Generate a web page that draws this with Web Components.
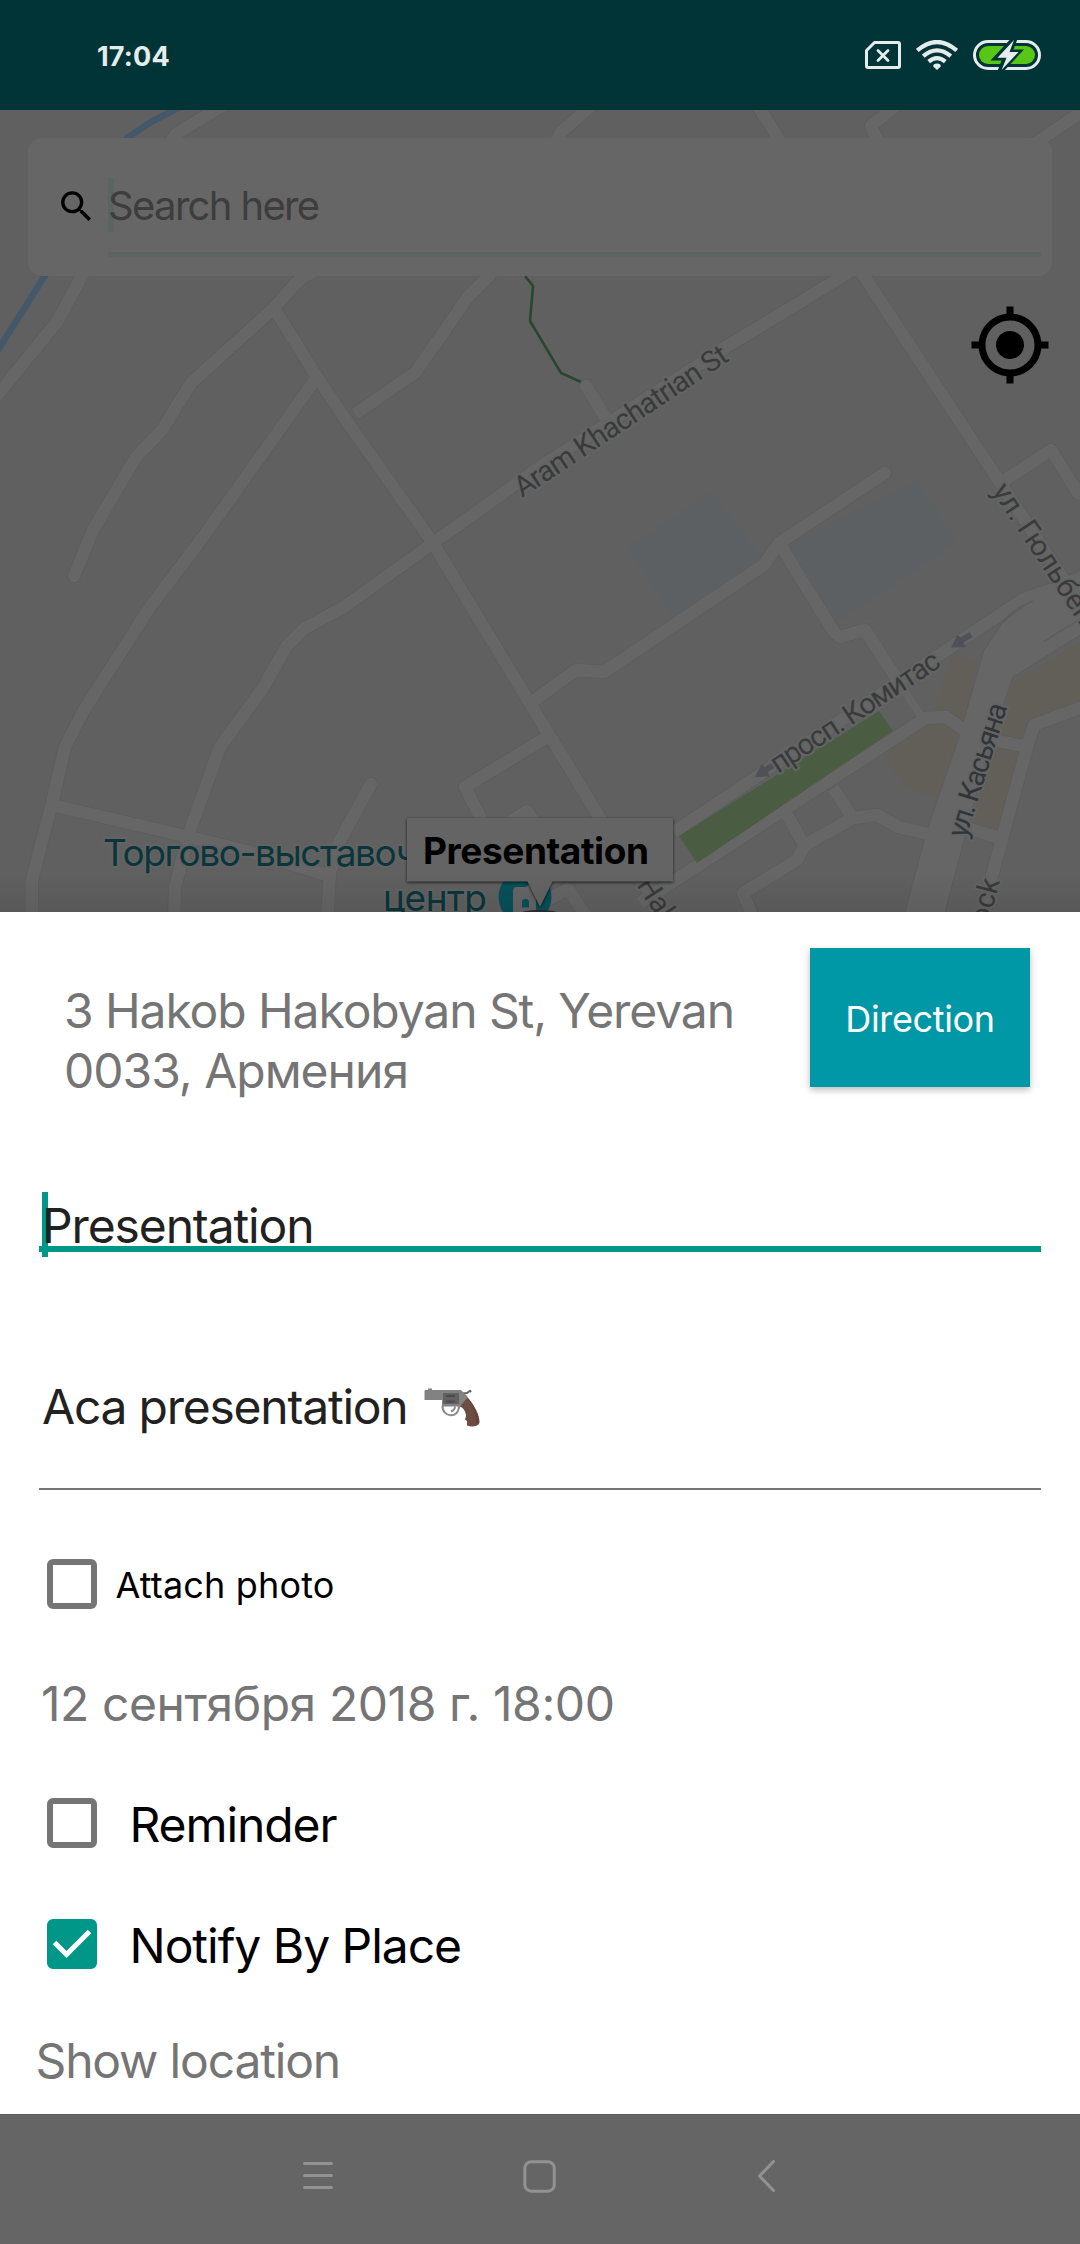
<!DOCTYPE html>
<html lang="ru">
<head>
<meta charset="utf-8">
<title>Place reminder</title>
<style>
body{margin:0;width:1080px;height:2244px;overflow:hidden;background:#606060;font-family:Inter,"Noto Sans",sans-serif}
</style>
</head>
<body>
<reminder-app></reminder-app>
<script>
const define = (name, html, ready) => {
  const tpl = document.createElement('template');
  tpl.innerHTML = html;
  customElements.define(name, class extends HTMLElement {
    connectedCallback() {
      if (this.shadowRoot) return;
      this.attachShadow({ mode: 'open' }).append(tpl.content.cloneNode(true));
      if (ready) ready(this, this.shadowRoot);
    }
  });
};

/* One line of text, tracked so that it fills the width it is given */
define('fit-text', `<style>:host{display:block;white-space:nowrap}span{display:inline-block}</style><span><slot></slot></span>`, (el, root) => {
  const span = root.querySelector('span');
  const want = +el.getAttribute('w');
  const n = el.textContent.length;
  span.style.letterSpacing = (want - span.getBoundingClientRect().width) / n + 'px';
});

define('status-bar', `<style>
:host{display:flex;height:110px;box-sizing:border-box;background:#003437;color:#e6ecec;align-items:center;justify-content:space-between;padding:0 39px 0 97px}
fit-text{font:700 27px/40px Inter,sans-serif;margin-top:4px}
.icons{display:flex;gap:15px;align-items:center}
svg{display:block}
</style>
<fit-text w="73">17:04</fit-text>
<div class="icons">
<svg width="36" height="30" viewBox="0 0 36 30" fill="none" stroke="#e6ecec" stroke-linecap="round" stroke-linejoin="round"><path stroke-width="3" d="M9.500 2.500H33q1.500 0 1.500 1.500V26q0 1.500-1.500 1.500H3q-1.500 0-1.500-1.500V10.500z"/><path stroke-width="2.800" d="M13 10.500 23 20.500M23 10.500 13 20.500"/></svg>
<svg width="42" height="30" viewBox="0 0 42 30" fill="none" stroke="#e6ecec" stroke-width="4.200"><path d="M1.300 10.500Q21-6.500 40.700 10.500"/><path d="M7.200 16.200Q21 4.500 34.800 16.200"/><path d="M12.700 21.600Q21 14.600 29.300 21.600"/><path fill="#e6ecec" stroke="none" d="M21 30l-3.800-3.600q0-2.800 3.800-2.800t3.800 2.800z"/></svg>
<svg width="68" height="30" viewBox="0 0 68 30"><rect x="1.500" y="1.500" width="65" height="27" rx="13.500" fill="none" stroke="#e6ecec" stroke-width="3"/><rect x="6" y="6" width="56" height="18" rx="9" fill="#57c616"/><path fill="#003437" d="M37.500-1 17.500 20.500H28.500L24.500 31H31L51 9.500H40.500L44.500-1z"/><path fill="#e6ecec" d="M41 0 24.500 17.800H33.500L28.600 30 45.500 12H36.500z"/></svg>
</div>`);

define('city-map', `<style>
:host{display:block;position:relative;height:802px;overflow:hidden}
svg{display:block}
text{font-family:Roboto,"Noto Sans",sans-serif}
.lab{font-size:29px;fill:#393b3b;stroke:#646464;stroke-width:4px;paint-order:stroke;stroke-linejoin:round}
.poi{font-family:Inter,sans-serif;font-size:37px;fill:#0a363b;stroke:#636363;stroke-width:4px;paint-order:stroke}
</style>
<svg width="1080" height="802" viewBox="0 110 1080 802">
<defs>
<g id="roads" fill="none" stroke-linejoin="round">
<path d="M232 100 176 134 82 276 57 322-10 404"/>
<path d="M330 262 303 277 296 283 274 308 191 383 162 430 136 457 93 530 74 576" stroke-linecap="round"/>
<path d="M274 308 317 377 355 433 433 543 540 720 605 826 675 930"/>
<path d="M317 377 258 460 203 537 148 610 84 710 65 747 52 803 32 880V920"/>
<path d="M600 98 561 132 489 276 468 297 415 373 355 414"/>
<path d="M753 98 778 138 864 276 972 440 1005 490 1085 612"/>
<path d="M905 98 871 126 878 142"/>
<path d="M1090 106 1039 141 843 276 726 347 540 467 433 543 344 607 305 628 286 647 263 688 220 747 189 833 175 887 174 920"/>
<path d="M586 386 612 428" stroke-linecap="round"/>
<path d="M52 805 189 837 258 854 330 876"/>
<path d="M327 920 330 873 339 842 371 784" stroke-linecap="round"/>
<path d="M547 737 465 787 485 826M510 822 527 811 540 830"/>
<path d="M532 702 576 670 604 672 764 565 779 543 885 473" stroke-linecap="round"/>
<path d="M779 543 834 632 840 637 865 630 902 687"/>
<path d="M902 687 921 716" stroke-width="8"/>
<path d="M640 903 926 718 946 717 968 733"/>
<path d="M674 832 936 657 1022 600 1050 592"/>
<path d="M540 904 568 889 590 922"/>
<path d="M786 813 803 843M833 788 852 817"/>
<path d="M932 835 898 827 877 815 853 818 805 845 797 860 743 893 755 922"/>
<path d="M1005 480 1051 450 1078 493 1090 497"/>
<path d="M1085 706 1034 725 1027 747 984 905M992 740 1029 747M970 829 1000 838"/>
</g>
<linearGradient id="fade" x1="0" y1="0" x2="0" y2="1"><stop offset="0" stop-color="#000" stop-opacity="0"/><stop offset="1" stop-color="#000" stop-opacity=".08"/></linearGradient>
</defs>
<rect y="110" width="1080" height="802" fill="#606060"/>
<g fill="#5d6063"><path d="M626 548 712 490 762 557 673 617z"/><path d="M788 543 917 480 958 543 838 622z"/></g>
<g fill="#625f58"><path d="M953 653 977 662 965 723 950 710 934 710z"/><path d="M884 757 926 723H946L960 735 938 797 905 787z"/><path d="M1013 682 1080 643V703L1036 723 1000 830 974 823 991 740z"/></g>
<path d="M180 107 151 122 127 138 44.800 276 8.600 333-3 352" fill="none" stroke="#44586a" stroke-width="6.500"/>
<use href="#roads" stroke="#5c5c5c" stroke-width="14"/>
<path fill="#666" stroke="#5c5c5c" stroke-width="1" d="M903 920 926 833 958 740 984 650 1003 622 1032 600 1022 592 1050 583 1082 570V634L1013 677 991 740 965 837 943 920z"/>
<use href="#roads" stroke="#666" stroke-width="12.400"/>
<path fill="none" stroke="#5d5d5d" stroke-width="1.500" d="M1003 622Q1010 611 1033 601M1043 642 1082 618"/>
<path fill="#4a5d43" d="M679 836 879 711 893 731 697 863z"/>
<path fill="none" stroke="#28472e" stroke-width="2.600" d="M525 276 533 286 530 321 561 373 581 382"/>
<g fill="#505058"><path id="arr" d="M951 647.500 957.500 635 961 637.500 969.500 632 972.500 637 963.500 642.500 966 647z"/><use href="#arr" transform="translate(-196 129.500)"/></g>
<text class="lab" transform="translate(522 498) rotate(-33.500)" textLength="250">Aram Khachatrian St</text>
<text class="lab" transform="translate(778 774) rotate(-33.400)" textLength="197">просп. Комитас</text>
<text class="lab" transform="translate(966 839) rotate(-72.600)" textLength="139" style="fill:#2f3539">ул. Касьяна</text>
<text class="lab" transform="translate(991.500 491) rotate(56.500)" textLength="162">ул. Гюльбен</text>
<text class="lab" transform="translate(636 885) rotate(57)">Hak</text>
<text class="lab" transform="translate(1000 881) rotate(-75)" text-anchor="end">ock</text>
<text class="poi" x="103" y="866" textLength="314">Торгово-выставоч</text>
<text class="poi" x="383" y="911" textLength="104">центр</text>
<circle cx="525" cy="897" r="26.500" fill="#08505a"/>
<path fill="#666" d="M513 891q0-4 4-4h9l4-3 6 6V912H513z"/><path fill="#08505a" d="M522 907.500V902q0-3 3-3h1q3 0 3 3v5.500z"/>
<ellipse cx="539.500" cy="912.500" rx="17" ry="2.500" fill="#2c2c2c"/>
<path d="M407 818H673V881.500H552.500L540 907 527.500 881.500H407z" fill="#646464" style="filter:drop-shadow(0 1px 1.500px #000b)"/>
<text x="423" y="864" textLength="226" style="font:650 37px Inter,sans-serif">Presentation</text>
<rect y="872" width="1080" height="40" fill="url(#fade)"/>
</svg>
<slot></slot>`);

define('search-card', `<style>
:host{position:absolute;left:28px;top:28px;width:1024px;height:138px;box-sizing:border-box;border-radius:14px;background:#666;display:flex;padding:0 11px 19px 28px}
svg{margin-top:48px;flex:none}
.field{position:relative;flex:1;margin-left:11px;border-bottom:5px solid #5a6462;color:#3d3d3d;font-size:40px;line-height:60px;padding-top:38px;box-sizing:border-box}
.caret{position:absolute;left:0;top:40px;width:6px;height:54px;background:#5a6462}
fit-text{position:relative}
</style>
<svg width="41" height="41" viewBox="0 0 24 24"><path d="M15.500 14h-.79l-.28-.27A6.471 6.471 0 0 0 16 9.500 6.500 6.500 0 1 0 9.500 16c1.610 0 3.090-.59 4.230-1.570l.27.28v.79l5 4.990L20.490 19l-4.990-5zm-6 0C7.010 14 5 11.990 5 9.500S7.010 5 9.500 5 14 7.010 14 9.500 11.990 14 9.500 14z"/></svg>
<div class="field"><div class="caret"></div><fit-text w="210.500">Search here</fit-text></div>`);

define('locate-button', `<style>:host{position:absolute;left:968px;top:193px}svg{display:block}</style>
<svg width="84" height="84" viewBox="0 0 24 24"><path d="M12 8c-2.210 0-4 1.790-4 4s1.790 4 4 4 4-1.790 4-4-1.790-4-4-4zm8.940 3A8.994 8.994 0 0 0 13 3.060V1h-2v2.060A8.994 8.994 0 0 0 3.060 11H1v2h2.060A8.994 8.994 0 0 0 11 20.940V23h2v-2.060A8.994 8.994 0 0 0 20.940 13H23v-2h-2.060zM12 19c-3.870 0-7-3.130-7-7s3.130-7 7-7 7 3.130 7 7-3.130 7-7 7z"/></svg>`);

define('check-row', `<style>
:host{display:flex;align-items:center;height:50px;margin-left:47px;font-size:48px;line-height:60px;color:#000}
.box{width:50px;height:50px;box-sizing:border-box;border:6px solid #757575;border-radius:6px;margin-right:32.500px}
:host([small]){font-size:36px}
:host([small]) .box{margin-right:18.500px}
:host([checked]) .box{background:#009688;border-color:#009688}
.txt{padding-top:4px}
:host([small]) .txt{padding-top:2px}
svg{display:none}
:host([checked]) svg{display:block;margin:-6px}
</style><div class="box"><svg width="50" height="50" fill="none" stroke="#fff" stroke-width="5"><path d="M7.500 23.500 19.500 35.500 42.500 12.500"/></svg></div><div class="txt"><slot></slot></div>`);

define('text-field', `<style>
:host{display:block;position:relative;margin:0 39px;height:var(--h);box-sizing:border-box;border-bottom:var(--line);color:#212121;font-size:48px;line-height:60px;padding-left:3px}
.caret{display:none}
:host([focused]) .caret{display:block;position:absolute;left:3px;top:-4px;width:6px;height:65px;background:#009688}
.row{position:relative;display:flex;align-items:flex-start}
</style><div class="caret"></div><div class="row"><slot></slot></div>`);

define('gun-emoji', `<style>:host{display:block;margin:11px 0 0 16px}svg{display:block}</style>
<svg width="57" height="40" viewBox="0 0 57 40"><path fill="#6d4c41" d="M36 13.500 43 9C50 16 56 28 55.500 34.500 55 38 49 39.500 43 37.500V33L41 31.500 42 28C42 24 39 19 36 18.500z"/><path fill="#5d4037" opacity=".5" d="M44 12c6 6 8 16 8 25l3-2c1-8-5-18-11-25z"/><path fill="none" stroke="#616161" stroke-width="2" d="M38 5.500 43 5 46 2.800 47 4"/><path fill="none" stroke="#8a8a8a" stroke-width="2" d="M18.500 17.500C18 30 35 31 35 18M31 18.500Q31 22 27 23.500"/><path fill="#828282" d="M1 2H4V.5H8V2H37L44 9 36 18.500H18V12H.5V3z"/><path fill="#616161" d="M19 5H35V16H19z"/><path fill="#4a4a4a" d="M22 7H31V9H22zM22 12.500H31V14.500H22z"/></svg>`);

define('place-sheet', `<style>
:host{display:block;height:1202px;background:#fff;font-size:48px;line-height:60px;color:#757575}
header{display:flex;justify-content:space-between;align-items:flex-start;height:248px;padding:36px 50px 0 64px;box-sizing:border-box}
.addr{padding-top:33px}
.btn{width:220px;height:139px;background:#0097a7;color:#fff;display:flex;align-items:center;justify-content:center;font-size:36px;box-shadow:0 3px 7px #0004;padding-top:3px;box-sizing:border-box}
.name{--h:56px;--line:6px solid #009688;margin-top:36px}
.note{--h:113px;--line:2px solid #757575;margin-top:125px}
.c1{margin-top:69px}.date{margin:65px 0 0 41px}.c2{margin-top:64px}.c3{margin-top:71px}.show{margin:62px 0 0 35.500px}
</style>
<header><div class="addr"><fit-text w="670">3 Hakob Hakobyan St, Yerevan</fit-text><fit-text w="344">0033, Армения</fit-text></div><div class="btn"><fit-text w="149.500">Direction</fit-text></div></header>
<text-field class="name" focused><fit-text w="271.500">Presentation</fit-text></text-field>
<text-field class="note"><fit-text w="365.500">Aca presentation</fit-text><gun-emoji></gun-emoji></text-field>
<check-row class="c1" small><fit-text w="219">Attach photo</fit-text></check-row>
<fit-text class="date" w="573.500">12 сентября 2018 г. 18:00</fit-text>
<check-row class="c2"><fit-text w="207">Reminder</fit-text></check-row>
<check-row class="c3" checked><fit-text w="331.500">Notify By Place</fit-text></check-row>
<fit-text class="show" w="304.500">Show location</fit-text>`);

define('nav-bar', `<style>
:host{display:flex;height:130px;box-sizing:border-box;background:#656565;border-top:1px solid #5a5a5a;padding:45px 304px 0 302px;justify-content:space-between}
svg{display:block;fill:none;stroke:#929292;stroke-width:3;stroke-linecap:round;stroke-linejoin:round}
</style>
<svg width="32" height="34"><path d="M2.500 3.500H29.500M2.500 15.500H29.500M2.500 27.500H29.500"/></svg>
<svg width="34" height="34" style="margin-left:64px"><rect x="1.800" y="1.700" width="29.500" height="29.500" rx="6.500"/></svg>
<svg width="20" height="34" style="margin-left:74px"><path d="M17.500 1.500 3.500 16 17.500 30.500"/></svg>`);

define('reminder-app', `<style>:host{display:flex;flex-direction:column;width:1080px;height:2244px}</style>
<status-bar></status-bar>
<city-map><search-card></search-card><locate-button></locate-button></city-map>
<place-sheet></place-sheet>
<nav-bar></nav-bar>`);
</script>
</body>
</html>
